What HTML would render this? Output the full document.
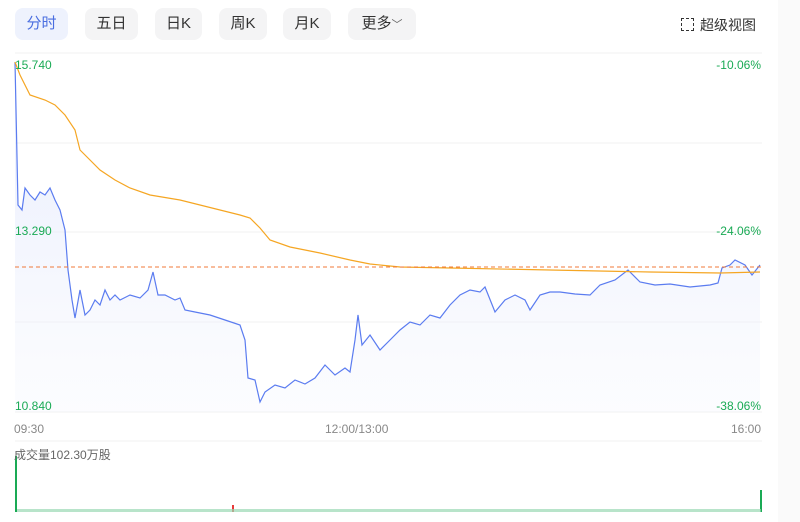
<!DOCTYPE html>
<html><head><meta charset="utf-8"><style>
body{margin:0;width:800px;height:522px;overflow:hidden;background:#fff;font-family:"Liberation Sans","Noto Sans CJK SC",sans-serif;position:relative}
.b{position:absolute;top:8px;height:32px;border-radius:8px;background:#f4f4f5;color:#333;font-size:15px;line-height:32px;text-align:center}
.t{position:absolute;font-size:12px;color:#1aaa55}
.x{position:absolute;font-size:12px;color:#888;top:422px}
</style></head><body>
<div class="b" style="left:15px;width:53px;background:#eef2fd;color:#4a6ee0">分时</div>
<div class="b" style="left:85px;width:53px">五日</div>
<div class="b" style="left:155px;width:47px">日K</div>
<div class="b" style="left:219px;width:48px">周K</div>
<div class="b" style="left:283px;width:48px">月K</div>
<div class="b" style="left:348px;width:68px">更多<span style="font-size:11px;color:#666">﹀</span></div>
<div style="position:absolute;left:681px;top:15px;font-size:14px;color:#333"><span style="display:inline-block;width:11px;height:11px;border:1.5px dashed #333;margin-right:6px;vertical-align:-1px"></span>超级视图</div>
<svg width="800" height="522" style="position:absolute;left:0;top:0">
<defs><linearGradient id="g" x1="0" y1="0" x2="0" y2="1"><stop offset="0" stop-color="#dfe6fb" stop-opacity=".8"/><stop offset="1" stop-color="#f4f6fe" stop-opacity=".3"/></linearGradient></defs>
<rect x="778" y="0" width="22" height="522" fill="#fafafa"/>
<g stroke="#f0f0f0" stroke-width="1">
<line x1="15" y1="53" x2="762" y2="53"/><line x1="15" y1="143" x2="762" y2="143"/><line x1="15" y1="232" x2="762" y2="232"/><line x1="15" y1="322" x2="762" y2="322"/><line x1="15" y1="412" x2="762" y2="412"/><line x1="15" y1="441" x2="762" y2="441"/></g>
<path d="M15,412 L15,62 L18,205 L22,210 L25,188 L30,195 L35,200 L40,192 L45,195 L50,188 L55,200 L60,210 L65,230 L68,270 L72,300 L75,318 L80,290 L85,315 L90,310 L95,300 L100,305 L105,290 L110,300 L115,295 L120,300 L130,295 L140,298 L148,290 L153,272 L158,295 L165,295 L175,300 L180,298 L185,310 L195,312 L210,315 L225,320 L240,325 L245,340 L248,378 L255,380 L260,402 L265,392 L275,385 L285,388 L295,380 L305,384 L315,378 L325,365 L335,375 L345,368 L350,372 L355,340 L358,315 L362,345 L370,335 L380,350 L390,340 L400,330 L410,322 L420,325 L430,315 L440,318 L450,305 L460,295 L470,290 L480,292 L485,287 L495,312 L505,300 L515,295 L525,300 L530,310 L540,295 L550,292 L560,292 L575,294 L590,295 L600,285 L615,280 L628,270 L640,282 L655,285 L670,284 L690,287 L710,285 L718,283 L722,268 L730,265 L735,260 L745,265 L752,275 L760,265 L760,412 Z" fill="url(#g)"/>
<polyline fill="none" stroke="#5b7cf0" stroke-width="1.2" points="15,62 18,205 22,210 25,188 30,195 35,200 40,192 45,195 50,188 55,200 60,210 65,230 68,270 72,300 75,318 80,290 85,315 90,310 95,300 100,305 105,290 110,300 115,295 120,300 130,295 140,298 148,290 153,272 158,295 165,295 175,300 180,298 185,310 195,312 210,315 225,320 240,325 245,340 248,378 255,380 260,402 265,392 275,385 285,388 295,380 305,384 315,378 325,365 335,375 345,368 350,372 355,340 358,315 362,345 370,335 380,350 390,340 400,330 410,322 420,325 430,315 440,318 450,305 460,295 470,290 480,292 485,287 495,312 505,300 515,295 525,300 530,310 540,295 550,292 560,292 575,294 590,295 600,285 615,280 628,270 640,282 655,285 670,284 690,287 710,285 718,283 722,268 730,265 735,260 745,265 752,275 760,265"/>
<polyline fill="none" stroke="#f5a623" stroke-width="1.2" points="15,62 20,75 30,95 45,100 55,105 65,115 75,130 80,150 90,160 100,170 115,180 130,188 150,195 180,200 200,205 220,210 240,215 250,218 260,228 270,240 290,247 320,253 350,260 370,264 400,267 450,268 550,270 650,272 720,273 760,272"/>
<line x1="15" y1="267" x2="762" y2="267" stroke="#f07a3a" stroke-dasharray="4,3" stroke-width="1"/>
<line x1="16" y1="456" x2="16" y2="512" stroke="#1aaa55" stroke-width="2"/>
<line x1="761" y1="490" x2="761" y2="512" stroke="#1aaa55" stroke-width="2"/>
<line x1="233" y1="505" x2="233" y2="512" stroke="#e83a3a" stroke-width="2"/>
<rect x="17" y="509" width="744" height="3" fill="#9ad8b3" opacity=".7"/>
</svg>
<div class="t" style="left:15px;top:58px">15.740</div>
<div class="t" style="left:15px;top:224px">13.290</div>
<div class="t" style="left:15px;top:399px">10.840</div>
<div class="t" style="right:39px;top:58px">-10.06%</div>
<div class="t" style="right:39px;top:224px">-24.06%</div>
<div class="t" style="right:39px;top:399px">-38.06%</div>
<div class="x" style="left:14px">09:30</div>
<div class="x" style="left:325px">12:00/13:00</div>
<div class="x" style="left:731px">16:00</div>
<div style="position:absolute;left:14px;top:446px;font-size:12px;color:#666">成交量102.30万股</div>
</body></html>
